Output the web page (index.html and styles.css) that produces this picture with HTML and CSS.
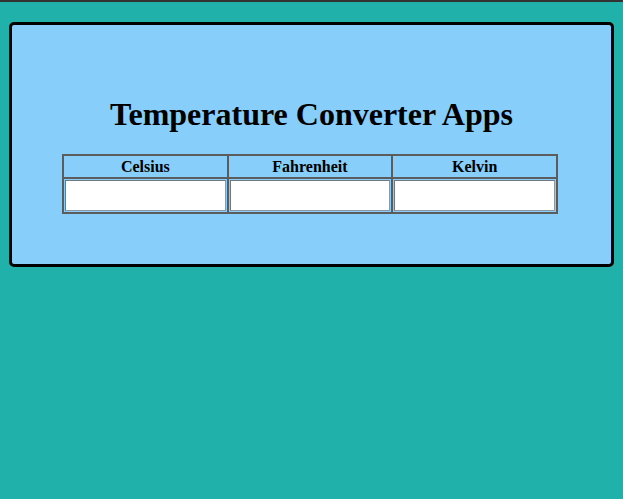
FILE: index.html
```html
<!DOCTYPE html>
<html>
<head>
<meta charset="utf-8">
<link rel="stylesheet" href="styles.css">
</head>
<body>
<div class="topbar"></div>
<div class="box">
  <h1 class="title">Temperature Converter Apps</h1>
  <table class="conv">
    <tr>
      <th>Celsius</th>
      <th>Fahrenheit</th>
      <th>Kelvin</th>
    </tr>
    <tr>
      <td><input type="text" class="field"></td>
      <td><input type="text" class="field"></td>
      <td><input type="text" class="field"></td>
    </tr>
  </table>
</div>
</body>
</html>
```
FILE: styles.css
```css
html, body {
  margin: 0;
  padding: 0;
}
body {
  background: #20B2AA;
  font-family: "Liberation Serif", "Times New Roman", serif;
  height: 499px;
}
.topbar {
  height: 2px;
  background: #333;
}
.box {
  box-sizing: border-box;
  width: 605px;
  margin: 20px auto 0;
  border: 3px solid #000;
  border-radius: 5px;
  background: #87CEFA;
  padding: 50px 0 50px;
}
.title {
  font-size: 32px;
  font-weight: bold;
  text-align: center;
  margin: 21px 0 21px;
}
.conv {
  margin: 0 0 0 50px;
  width: 496px;
  table-layout: fixed;
  border-collapse: collapse;
  border: 2px solid;
  border-color: #6e6e6e #3c3c3c #333 #6e6e6e;
}
.conv th, .conv td {
  border: 2px solid #5c5c5c;
  padding: 1px;
}
.conv th {
  font-size: 16px;
  font-weight: bold;
  line-height: 18px;
  height: 21px;
  padding: 0 1px;
}
.field {
  display: block;
  box-sizing: border-box;
  width: 100%;
  height: 31px;
  margin: 0;
  border: 1px solid #8d98a4;
  border-top-color: #6f7780;
  border-left-color: #6f7780;
  background: #fff;
}
```
